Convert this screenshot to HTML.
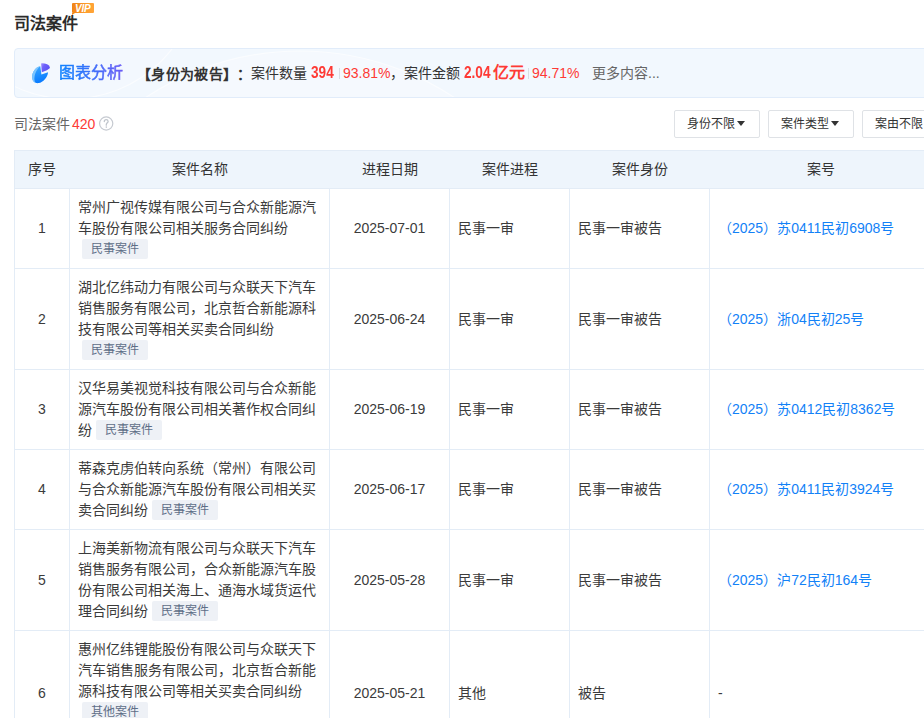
<!DOCTYPE html>
<html lang="zh-CN"><head><meta charset="utf-8">
<style>
*{box-sizing:border-box;margin:0;padding:0}
html,body{width:924px;height:718px;overflow:hidden;background:#fff}
body{font-family:"Liberation Sans",sans-serif;font-size:14px;color:#333;position:relative;text-spacing-trim:space-all}
.abs{position:absolute}
.title{left:14px;top:13px;font-size:16px;font-weight:bold;color:#2b2b2b;line-height:22px;white-space:nowrap}
.vip{left:72px;top:3px;width:22px;height:10px;background:linear-gradient(100deg,#ef8317,#ff9f2e 70%,#ffa53a);border-radius:1px}
.vip:after{content:"";position:absolute;left:0;top:10px;border-left:3px solid #f28a1a;border-bottom:2px solid transparent}
.vip span{position:absolute;left:3px;top:-0.5px;font-size:10px;line-height:11px;font-weight:bold;font-style:italic;color:#fff;letter-spacing:-0.2px}
.banner{left:14px;top:48px;width:930px;height:50px;background:#f2f8fe;border:1px solid #e1ecfa;border-radius:4px;overflow:hidden}
.btext{position:absolute;top:0;line-height:48px;white-space:nowrap}
.grad{font-size:16px;-webkit-text-stroke:0.55px transparent;background:linear-gradient(90deg,#0d84ff,#6b5cf5);-webkit-background-clip:text;background-clip:text;color:transparent}
.red{color:#fe3a35}
.sep{position:absolute;top:19px;width:1px;height:11px;background:#d9dde3}
.cnd{font-weight:bold;transform:scaleX(.85);transform-origin:left center}
.sub{left:14px;top:114px;line-height:20px;color:#666;white-space:nowrap}
.q{position:absolute;left:99px;top:116px;width:15px;height:15px;border:1px solid #c3c8d0;border-radius:50%;font-size:11px;line-height:13px;text-align:center;color:#c3c8d0}
.btn{top:110px;height:28px;border:1px solid #dfe2e6;border-radius:2px;font-size:12px;line-height:26px;color:#333;text-align:left;padding-left:12px;white-space:nowrap;background:#fff}
.tri{display:inline-block;width:0;height:0;border-left:4px solid transparent;border-right:4px solid transparent;border-top:5px solid #333;vertical-align:2px;margin-left:2px}
table{position:absolute;left:14px;top:150px;border-collapse:collapse;table-layout:fixed;width:917px}
td,th{border:1px solid #e3ecf6;padding:8px 8px;line-height:21px;font-weight:normal;vertical-align:middle;color:#3b3b3b}
th{background:#eef5fc;height:38px;padding:0;text-align:center;color:#333;border-left:0;border-right:0}
th:first-child{border-left:1px solid #e3ecf6}
td.c{text-align:center}
.tag{display:inline-block;height:20px;line-height:20px;padding:0 9px;font-size:12px;color:#5e6e87;background:#eef1f6;border-radius:2px;margin-left:4px;vertical-align:top}
.link{color:#1281f7}
</style></head><body>
<div class="abs title">司法案件</div>
<div class="abs vip"><span>VIP</span></div>
<div class="abs banner">
  <svg class="abs" style="left:0;top:0" width="930" height="48" viewBox="15 49 930 48"><circle cx="70" cy="-30" r="129" fill="rgba(255,255,255,0.12)" stroke="rgba(255,255,255,0.6)" stroke-width="1.2"/><circle cx="300" cy="330" r="279" fill="rgba(255,255,255,0.22)" stroke="rgba(255,255,255,0.6)" stroke-width="1.2"/></svg>
  <svg class="abs" style="left:13px;top:9px" width="28" height="30" viewBox="0 0 28 30">
    <defs><linearGradient id="g1" x1="0" y1="0" x2="0.3" y2="1"><stop offset="0" stop-color="#3aa8ff"/><stop offset="1" stop-color="#0a7cff"/></linearGradient>
    <linearGradient id="g2" x1="0" y1="0" x2="1" y2="0.6"><stop offset="0" stop-color="#a596ff"/><stop offset="0.35" stop-color="#6f62fb"/><stop offset="1" stop-color="#5a50f2"/></linearGradient></defs>
    <path d="M13.4,16.6 L12.3,8.2 C7.5,8.6 3.8,14.5 4.1,19.8 C4.4,23.8 7.3,25.6 10.6,25.1 C15.2,24.4 19.6,19.2 20.1,14.2 Z" fill="url(#g1)"/>
    <path d="M12.3,8.2 C7.5,8.6 3.8,14.5 4.1,19.8 C4.3,22.6 5.6,24.4 7.6,25 C6.4,23.3 6.2,21 6.5,19 C7.1,14.6 9.5,10.2 12.3,8.2 Z" fill="#8fd0ff" opacity="0.8"/>
    <path d="M13.1,5.4 C16.6,5.1 19.8,6 21.2,7.8 L22,10.1 L18.9,12.2 L13.8,14.3 Z" fill="url(#g2)"/>
  </svg>
  <div class="btext grad" style="left:44px">图表分析</div>
  <div class="btext" style="left:122px;top:1px;font-weight:bold;font-size:14px;color:#333;letter-spacing:0.35px">【身份为被告】：</div>
  <div class="btext" style="left:236px">案件数量</div>
  <div class="btext red cnd" style="left:296px;font-size:16px">394</div>
  <div class="sep" style="left:324px"></div>
  <div class="btext" style="left:328px"><span class="red">93.81%</span>，案件金额</div>
  <div class="btext red cnd" style="left:449px;font-size:16px">2.04</div>
  <div class="btext red" style="left:478px;font-size:16px;font-weight:bold">亿元</div>
  <div class="sep" style="left:513px"></div>
  <div class="btext red" style="left:517px">94.71%</div>
  <div class="btext" style="left:577px;color:#666">更多内容...</div>
</div>
<div class="abs sub">司法案件<span class="red" style="margin-left:2px">420</span></div><svg class="abs" style="left:98px;top:115px" width="17" height="17" viewBox="0 0 17 17"><circle cx="8.2" cy="8.5" r="6.6" fill="none" stroke="#c6cad1" stroke-width="1.2"/><path d="M6.3,6.6 C6.3,5.3 7.2,4.7 8.2,4.7 C9.3,4.7 10.1,5.4 10.1,6.4 C10.1,7.7 8.3,8 8.3,9.6 L8.3,10.2" fill="none" stroke="#c0c5cc" stroke-width="1.3" stroke-linecap="round"/><circle cx="8.3" cy="12.1" r="0.8" fill="#c0c5cc"/></svg>
<div class="abs btn" style="left:674px;width:86px">身份不限<span class="tri"></span></div>
<div class="abs btn" style="left:768px;width:86px">案件类型<span class="tri"></span></div>
<div class="abs btn" style="left:862px;width:86px">案由不限<span class="tri"></span></div>

<table>
<colgroup><col style="width:55px"><col style="width:260px"><col style="width:120px"><col style="width:120px"><col style="width:140px"><col style="width:222px"></colgroup>
<tr><th>序号</th><th>案件名称</th><th>进程日期</th><th>案件进程</th><th>案件身份</th><th>案号</th></tr>
<tr style="height:80px"><td class="c">1</td><td>常州广视传媒有限公司与合众新能源汽车股份有限公司相关服务合同纠纷<span class="tag">民事案件</span></td><td class="c">2025-07-01</td><td>民事一审</td><td>民事一审被告</td><td class="link">（2025）苏0411民初6908号</td></tr>
<tr style="height:101px"><td class="c">2</td><td>湖北亿纬动力有限公司与众联天下汽车销售服务有限公司，北京哲合新能源科技有限公司等相关买卖合同纠纷<span class="tag">民事案件</span></td><td class="c">2025-06-24</td><td>民事一审</td><td>民事一审被告</td><td class="link">（2025）浙04民初25号</td></tr>
<tr style="height:80px"><td class="c">3</td><td>汉华易美视觉科技有限公司与合众新能源汽车股份有限公司相关著作权合同纠纷<span class="tag">民事案件</span></td><td class="c">2025-06-19</td><td>民事一审</td><td>民事一审被告</td><td class="link">（2025）苏0412民初8362号</td></tr>
<tr style="height:80px"><td class="c">4</td><td>蒂森克虏伯转向系统（常州）有限公司与合众新能源汽车股份有限公司相关买卖合同纠纷<span class="tag">民事案件</span></td><td class="c">2025-06-17</td><td>民事一审</td><td>民事一审被告</td><td class="link">（2025）苏0411民初3924号</td></tr>
<tr style="height:101px"><td class="c">5</td><td>上海美新物流有限公司与众联天下汽车销售服务有限公司，合众新能源汽车股份有限公司相关海上、通海水域货运代理合同纠纷<span class="tag">民事案件</span></td><td class="c">2025-05-28</td><td>民事一审</td><td>民事一审被告</td><td class="link">（2025）沪72民初164号</td></tr>
<tr style="height:126px"><td class="c">6</td><td style="vertical-align:top">惠州亿纬锂能股份有限公司与众联天下汽车销售服务有限公司，北京哲合新能源科技有限公司等相关买卖合同纠纷<span class="tag">其他案件</span></td><td class="c">2025-05-21</td><td>其他</td><td>被告</td><td>-</td></tr>
</table>
</body></html>
